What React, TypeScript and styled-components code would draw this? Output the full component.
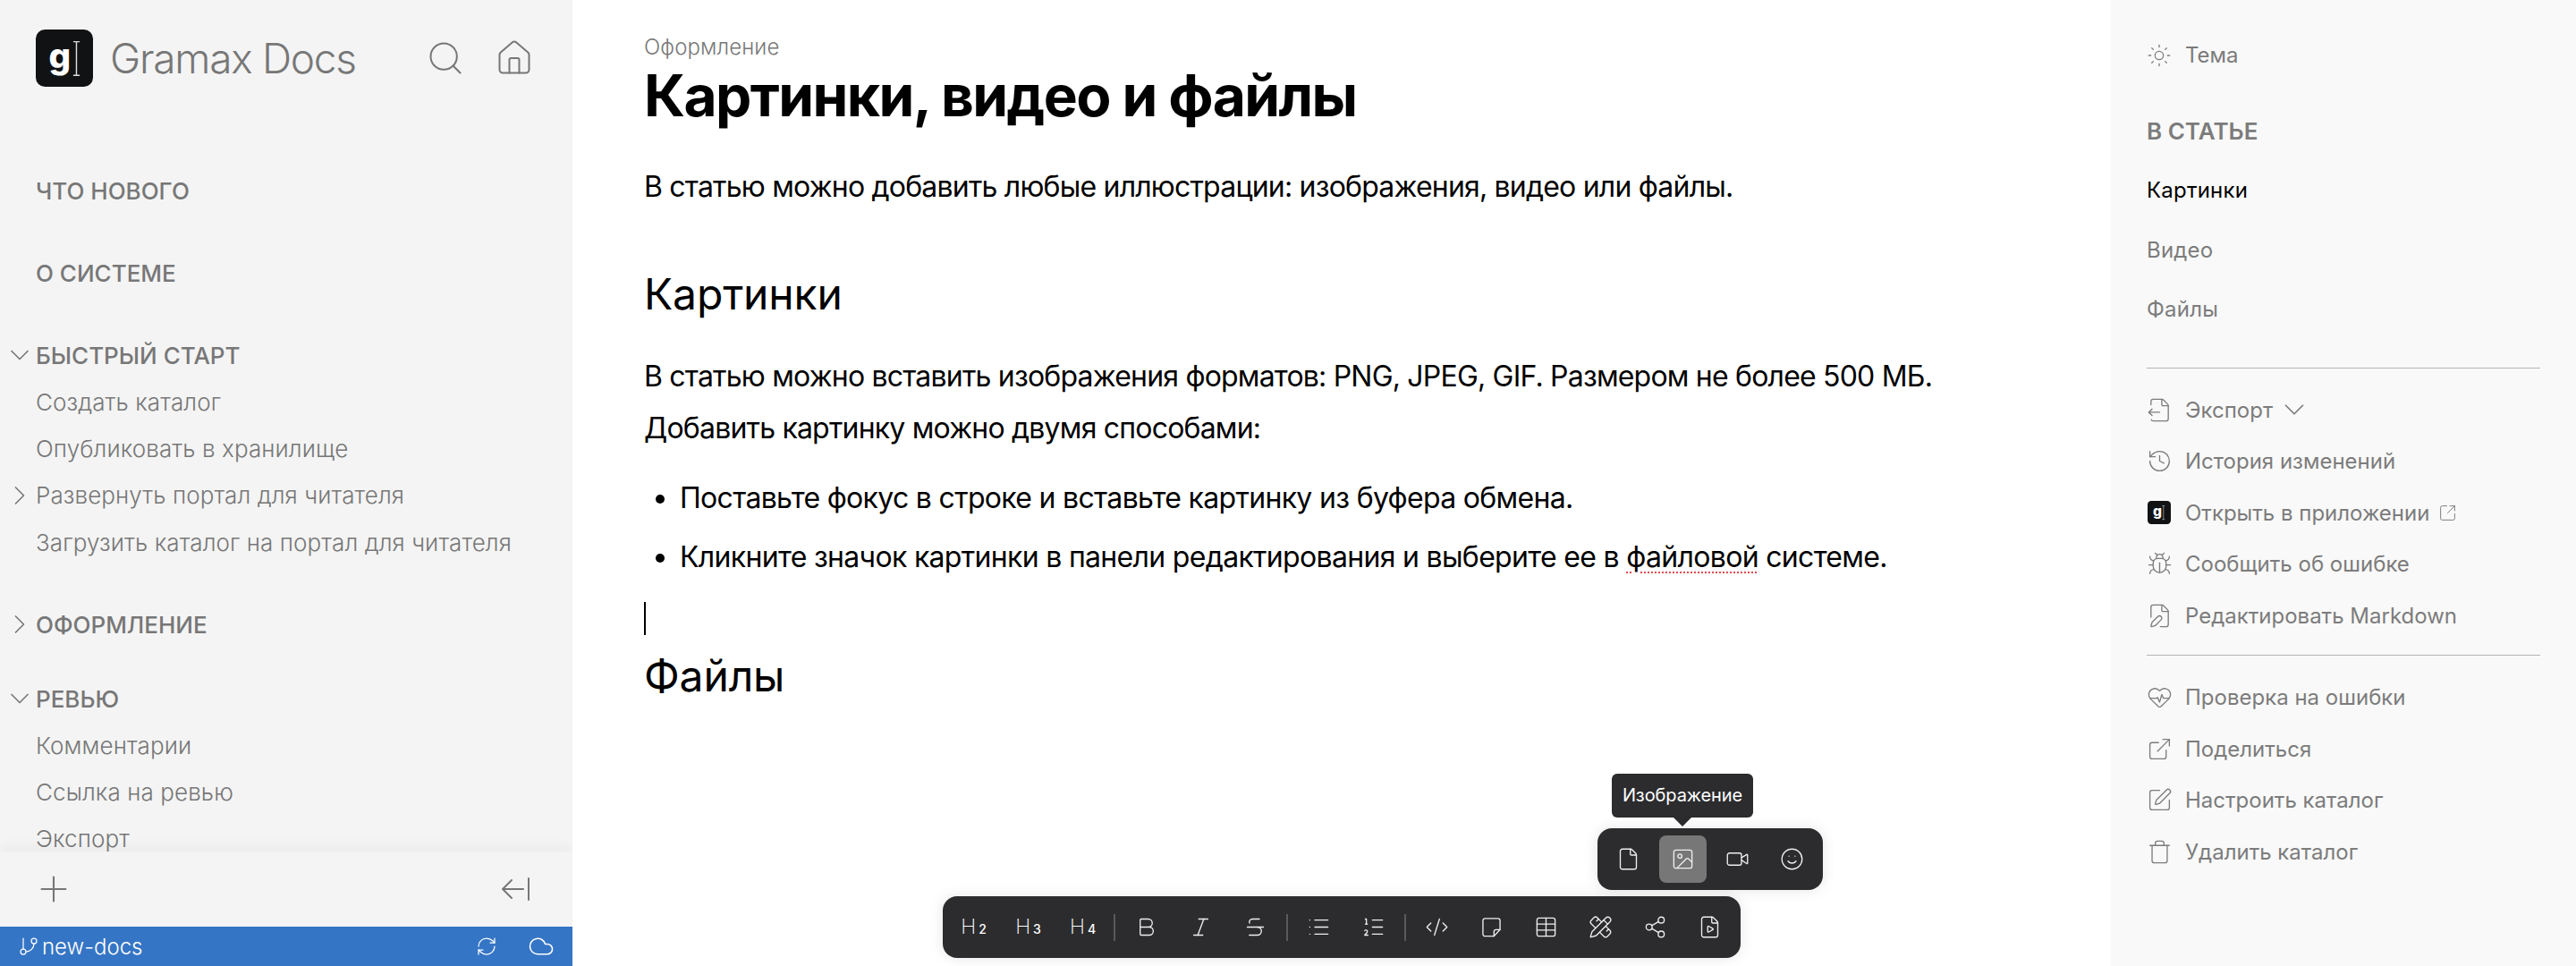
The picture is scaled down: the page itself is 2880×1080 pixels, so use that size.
import React from 'react';
import styled, { createGlobalStyle } from 'styled-components';
import {
  Bold,
  Bug,
  ChevronDown,
  ChevronRight,
  Cloud,
  CodeXml,
  ExternalLink,
  File,
  FileOutput,
  FilePen,
  FilePlay,
  GitBranch,
  HeartPulse,
  History,
  House,
  Image,
  Italic,
  List,
  ListOrdered,
  PencilRuler,
  Plus,
  RefreshCw,
  Search,
  Share2,
  Smile,
  SquareArrowOutUpRight,
  SquarePen,
  Strikethrough,
  Sun,
  Table,
  Trash,
  Video,
} from 'lucide-react';

const GlobalStyle = createGlobalStyle`
  html, body {
    margin: 0;
    height: 100%;
    overflow: hidden;
    background: #fff;
    font-family: Inter, "Noto Sans", sans-serif;
  }
  * { box-sizing: border-box; }
  svg { flex-shrink: 0; }
`;

const Page = styled.div`
  display: flex;
  width: 2880px;
  height: 1080px;
  overflow: hidden;
`;

const Sidebar = styled.aside`
  display: flex;
  flex-direction: column;
  flex-shrink: 0;
  width: 640px;
  height: 100%;
  background: #f4f4f4;
  color: #777;
`;

const Brand = styled.header`
  display: flex;
  align-items: center;
  flex-shrink: 0;
  padding: 33px 43px 0 40px;
`;

const LogoBox = styled.div<{ $size: number }>`
  display: flex;
  align-items: center;
  justify-content: center;
  flex-shrink: 0;
  width: ${(p) => p.$size}px;
  height: ${(p) => p.$size}px;
  border-radius: ${(p) => p.$size * 0.16}px;
  background: #111214;
  color: #fff;
  font-size: ${(p) => p.$size * 0.6}px;
  font-weight: 800;
  line-height: 1;
`;

const LogoGlyph = styled.span<{ $offset: number }>`
  margin-top: -${(p) => p.$offset}px;
  margin-right: ${(p) => p.$offset * 0.3}px;
`;

const BrandName = styled.span`
  flex: 1;
  margin-left: 19px;
  font-size: 46px;
  font-weight: 300;
  letter-spacing: -1.25px;
`;

const BrandIcons = styled.div`
  display: flex;
  align-items: center;
  gap: 33px;
`;

const Nav = styled.nav`
  flex: 1;
  min-height: 0;
  overflow: hidden;
  padding-top: 90px;
`;

const NavHead = styled.div<{ $gap?: number }>`
  display: flex;
  align-items: center;
  height: 52px;
  margin-top: ${(p) => p.$gap ?? 40}px;
  font-size: 26px;
  font-weight: 500;
  white-space: nowrap;
`;

const NavItem = styled.div`
  display: flex;
  align-items: center;
  height: 52.3px;
  font-size: 26px;
  font-weight: 300;
  letter-spacing: 0.1px;
  white-space: nowrap;
`;

const Arrow = styled.span`
  display: flex;
  align-items: center;
  justify-content: center;
  width: 40px;
  padding-left: 4px;
`;

const SideActions = styled.div`
  display: flex;
  align-items: center;
  justify-content: space-between;
  flex-shrink: 0;
  height: 84px;
  padding: 0 47px 0 37px;
  background: #f4f4f4;
  box-shadow: 0 -6px 14px rgba(0, 0, 0, 0.04);
  position: relative;
`;

const StatusBar = styled.div`
  display: flex;
  align-items: center;
  flex-shrink: 0;
  height: 44px;
  padding: 0 20px;
  background: #3575c5;
  color: #fff;
  font-size: 24px;
  font-weight: 300;
`;

const Branch = styled.span`
  flex: 1;
  margin-left: 3px;
`;

const StatusIcons = styled.div`
  display: flex;
  align-items: center;
  gap: 34px;
`;

const Main = styled.main`
  position: relative;
  flex: 1;
  min-width: 0;
  padding: 38px 80px 0;
  background: #fff;
  color: #000;
`;

const Crumb = styled.div`
  height: 30px;
  font-size: 24px;
  font-weight: 300;
  line-height: 30px;
  letter-spacing: 0.1px;
  color: #777;
`;

const Title = styled.h1`
  margin: 0;
  font-size: 64px;
  font-weight: 700;
  line-height: 78px;
  letter-spacing: -1.6px;
`;

const Paragraph = styled.p<{ $top: number }>`
  margin: ${(p) => p.$top}px 0 0;
  font-size: 32px;
  font-weight: 400;
  line-height: 48px;
  letter-spacing: -0.8px;
  white-space: nowrap;
`;

const Heading = styled.h2<{ $top: number }>`
  margin: ${(p) => p.$top}px 0 0;
  font-size: 48px;
  font-weight: 400;
  line-height: 64px;
  letter-spacing: -0.15px;
`;

const Bullets = styled.ul`
  margin: 30px 0 0;
  padding: 0 0 0 40px;
`;

const Bullet = styled.li`
  height: 66px;
  font-size: 32px;
  line-height: 48px;
  letter-spacing: -0.68px;
  white-space: nowrap;
`;

const Misspelled = styled.span`
  text-decoration: underline dotted #e5484d 2px;
  text-underline-offset: 5px;
`;

const Caret = styled.div`
  width: 2px;
  height: 37px;
  margin-top: 8px;
  background: #000;
`;

const ToolbarDock = styled.div`
  position: absolute;
  left: 50%;
  bottom: 9px;
  transform: translateX(-50%);
`;

const Toolbar = styled.div`
  display: flex;
  align-items: center;
  gap: 8px;
  height: 69px;
  padding: 0 8px;
  border-radius: 16px;
  background: #2c2c2e;
  box-shadow: 0 0 16px rgba(0, 0, 0, 0.1);
  color: #fff;
`;

const MediaBar = styled(Toolbar)`
  position: absolute;
  right: -92px;
  bottom: 76px;
`;

const ToolButton = styled.div<{ $active?: boolean }>`
  display: flex;
  align-items: center;
  justify-content: center;
  width: 53px;
  height: 53px;
  border-radius: 8px;
  background: ${(p) => (p.$active ? '#777' : 'transparent')};
`;

const Separator = styled.div`
  width: 2px;
  height: 30px;
  background: #5a5a5c;
`;

const HeadingMark = styled.span`
  font-size: 23px;
  font-weight: 200;
  line-height: 1;
  sub {
    font-size: 14px;
    font-weight: 500;
    vertical-align: baseline;
    margin-left: 3px;
  }
`;

const Tooltip = styled.div`
  position: absolute;
  right: -14px;
  bottom: 157px;
  padding: 0 12px;
  height: 49px;
  border-radius: 6px;
  background: #2c2c2e;
  color: #fff;
  font-size: 20px;
  font-weight: 400;
  line-height: 49px;
  letter-spacing: -0.1px;
  white-space: nowrap;
  &::after {
    content: '';
    position: absolute;
    left: 50%;
    top: 100%;
    margin-left: -10px;
    border: 10px solid transparent;
    border-top-color: #2c2c2e;
    border-bottom: 0;
  }
`;

const Aside = styled.aside`
  display: flex;
  flex-direction: column;
  flex-shrink: 0;
  width: 520px;
  padding: 0 40px;
  background: #f9f9f9;
  color: #7c7c7c;
`;

const ActionRow = styled.div`
  display: flex;
  align-items: center;
  height: 57.5px;
  font-size: 24px;
  font-weight: 400;
  white-space: nowrap;
`;

const ThemeRow = styled(ActionRow)`
  height: 53px;
  margin-top: 35px;
`;

const ActionIcon = styled.span`
  display: flex;
  align-items: center;
  justify-content: center;
  flex-shrink: 0;
  width: 28px;
  margin-right: 15px;
`;

const TrailingIcon = styled.span<{ $gap: number }>`
  display: flex;
  align-items: center;
  margin-left: ${(p) => p.$gap}px;
`;

const AsideTitle = styled.div`
  margin-top: 41px;
  height: 36px;
  font-size: 26px;
  font-weight: 600;
  line-height: 36px;
`;

const TocLink = styled.div<{ $current?: boolean }>`
  height: 66.5px;
  font-size: 24px;
  font-weight: 400;
  line-height: 66.5px;
  letter-spacing: 0.2px;
  color: ${(p) => (p.$current ? '#000' : '#7c7c7c')};
`;

const Toc = styled.div`
  margin-top: 15px;
`;

const Rule = styled.hr<{ $top: number; $bottom: number }>`
  flex-shrink: 0;
  width: 100%;
  height: 1px;
  margin: ${(p) => p.$top}px 0 ${(p) => p.$bottom}px;
  border: 0;
  background: #b4b4b4;
`;

const Logo = ({ size }: { size: number }) => {
  const beamHeight = size * 0.7;
  const beamWidth = size * 0.14;
  return (
    <LogoBox $size={size}>
      <LogoGlyph $offset={size * 0.08}>g</LogoGlyph>
      <svg width={beamWidth} height={beamHeight} viewBox="0 0 10 44" fill="none" stroke="#ddd" strokeWidth="1.6">
        <path d="M1 1h8M1 43h8M5 1v42" />
      </svg>
    </LogoBox>
  );
};

const CollapseIcon = () => (
  <svg width="34" height="28" viewBox="0 0 34 28" fill="none" stroke="currentColor" strokeWidth="2" strokeLinecap="round" strokeLinejoin="round">
    <path d="M32 2v24M4 14h22M13 4 3 14l10 10" />
  </svg>
);

const NoteIcon = () => (
  <svg width="27" height="27" viewBox="0 0 24 24" fill="none" stroke="#eee" strokeWidth="1.2" strokeLinecap="round" strokeLinejoin="round">
    <path d="M3.5 5.5a2 2 0 0 1 2-2h13a2 2 0 0 1 2 2v9l-6 6.5h-9a2 2 0 0 1-2-2z" />
    <path d="M14.5 21v-4.5a2 2 0 0 1 2-2h4" />
  </svg>
);

const thin = { strokeWidth: 1.25 };
const fine = { strokeWidth: 1.1 };
const rowIcon = { size: 29, strokeWidth: 1.1 };
const toolIcon = { size: 27, strokeWidth: 1.2, color: '#eee' };

const App = () => (
  <Page>
    <GlobalStyle />
    <Sidebar>
      <Brand>
        <Logo size={64} />
        <BrandName>Gramax Docs</BrandName>
        <BrandIcons>
          <Search size={44} {...fine} />
          <House size={44} {...fine} />
        </BrandIcons>
      </Brand>
      <Nav>
        <NavHead $gap={0}>
          <Arrow />
          ЧТО НОВОГО
        </NavHead>
        <NavHead>
          <Arrow />О СИСТЕМЕ
        </NavHead>
        <NavHead>
          <Arrow>
            <ChevronDown size={36} {...fine} />
          </Arrow>
          БЫСТРЫЙ СТАРТ
        </NavHead>
        <NavItem>
          <Arrow />
          Создать каталог
        </NavItem>
        <NavItem>
          <Arrow />
          Опубликовать в хранилище
        </NavItem>
        <NavItem>
          <Arrow>
            <ChevronRight size={36} {...fine} />
          </Arrow>
          Развернуть портал для читателя
        </NavItem>
        <NavItem>
          <Arrow />
          Загрузить каталог на портал для читателя
        </NavItem>
        <NavHead>
          <Arrow>
            <ChevronRight size={36} {...fine} />
          </Arrow>
          ОФОРМЛЕНИЕ
        </NavHead>
        <NavHead $gap={31}>
          <Arrow>
            <ChevronDown size={36} {...fine} />
          </Arrow>
          РЕВЬЮ
        </NavHead>
        <NavItem>
          <Arrow />
          Комментарии
        </NavItem>
        <NavItem>
          <Arrow />
          Ссылка на ревью
        </NavItem>
        <NavItem>
          <Arrow />
          Экспорт
        </NavItem>
      </Nav>
      <SideActions>
        <Plus size={46} {...fine} />
        <CollapseIcon />
      </SideActions>
      <StatusBar>
        <GitBranch size={24} {...thin} />
        <Branch>new-docs</Branch>
        <StatusIcons>
          <RefreshCw size={24} {...thin} />
          <Cloud size={30} {...thin} />
        </StatusIcons>
      </StatusBar>
    </Sidebar>

    <Main>
      <Crumb>Оформление</Crumb>
      <Title>Картинки, видео и файлы</Title>
      <Paragraph $top={39}>В статью можно добавить любые иллюстрации: изображения, видео или файлы.</Paragraph>
      <Heading $top={64}>Картинки</Heading>
      <Paragraph $top={36}>В статью можно вставить изображения форматов: PNG, JPEG, GIF. Размером не более 500 МБ.</Paragraph>
      <Paragraph $top={10}>Добавить картинку можно двумя способами:</Paragraph>
      <Bullets>
        <Bullet>Поставьте фокус в строке и вставьте картинку из буфера обмена.</Bullet>
        <Bullet>
          Кликните значок картинки в панели редактирования и выберите ее в <Misspelled>файловой</Misspelled> системе.
        </Bullet>
      </Bullets>
      <Caret />
      <Heading $top={14}>Файлы</Heading>

      <ToolbarDock>
        <Tooltip>Изображение</Tooltip>
        <MediaBar>
          <ToolButton>
            <File {...toolIcon} />
          </ToolButton>
          <ToolButton $active>
            <Image {...toolIcon} />
          </ToolButton>
          <ToolButton>
            <Video {...toolIcon} />
          </ToolButton>
          <ToolButton>
            <Smile {...toolIcon} />
          </ToolButton>
        </MediaBar>
        <Toolbar>
          <ToolButton>
            <HeadingMark>
              H<sub>2</sub>
            </HeadingMark>
          </ToolButton>
          <ToolButton>
            <HeadingMark>
              H<sub>3</sub>
            </HeadingMark>
          </ToolButton>
          <ToolButton>
            <HeadingMark>
              H<sub>4</sub>
            </HeadingMark>
          </ToolButton>
          <Separator />
          <ToolButton>
            <Bold {...toolIcon} />
          </ToolButton>
          <ToolButton>
            <Italic {...toolIcon} />
          </ToolButton>
          <ToolButton>
            <Strikethrough {...toolIcon} />
          </ToolButton>
          <Separator />
          <ToolButton>
            <List {...toolIcon} />
          </ToolButton>
          <ToolButton>
            <ListOrdered {...toolIcon} />
          </ToolButton>
          <Separator />
          <ToolButton>
            <CodeXml {...toolIcon} />
          </ToolButton>
          <ToolButton>
            <NoteIcon />
          </ToolButton>
          <ToolButton>
            <Table {...toolIcon} />
          </ToolButton>
          <ToolButton>
            <PencilRuler {...toolIcon} />
          </ToolButton>
          <ToolButton>
            <Share2 {...toolIcon} />
          </ToolButton>
          <ToolButton>
            <FilePlay {...toolIcon} />
          </ToolButton>
        </Toolbar>
      </ToolbarDock>
    </Main>

    <Aside>
      <ThemeRow>
        <ActionIcon>
          <Sun size={28} {...fine} />
        </ActionIcon>
        Тема
      </ThemeRow>
      <AsideTitle>В СТАТЬЕ</AsideTitle>
      <Toc>
        <TocLink $current>Картинки</TocLink>
        <TocLink>Видео</TocLink>
        <TocLink>Файлы</TocLink>
      </Toc>
      <Rule $top={31} $bottom={18} />
      <ActionRow>
        <ActionIcon>
          <FileOutput {...rowIcon} />
        </ActionIcon>
        Экспорт
        <TrailingIcon $gap={5}>
          <ChevronDown size={38} {...fine} />
        </TrailingIcon>
      </ActionRow>
      <ActionRow>
        <ActionIcon>
          <History {...rowIcon} />
        </ActionIcon>
        История изменений
      </ActionRow>
      <ActionRow>
        <ActionIcon>
          <Logo size={26} />
        </ActionIcon>
        Открыть в приложении
        <TrailingIcon $gap={10}>
          <SquareArrowOutUpRight size={21} {...fine} />
        </TrailingIcon>
      </ActionRow>
      <ActionRow>
        <ActionIcon>
          <Bug {...rowIcon} />
        </ActionIcon>
        Сообщить об ошибке
      </ActionRow>
      <ActionRow>
        <ActionIcon>
          <FilePen {...rowIcon} />
        </ActionIcon>
        Редактировать Markdown
      </ActionRow>
      <Rule $top={15} $bottom={18} />
      <ActionRow>
        <ActionIcon>
          <HeartPulse {...rowIcon} />
        </ActionIcon>
        Проверка на ошибки
      </ActionRow>
      <ActionRow>
        <ActionIcon>
          <ExternalLink {...rowIcon} />
        </ActionIcon>
        Поделиться
      </ActionRow>
      <ActionRow>
        <ActionIcon>
          <SquarePen {...rowIcon} />
        </ActionIcon>
        Настроить каталог
      </ActionRow>
      <ActionRow>
        <ActionIcon>
          <Trash {...rowIcon} />
        </ActionIcon>
        Удалить каталог
      </ActionRow>
    </Aside>
  </Page>
);

export default App;
